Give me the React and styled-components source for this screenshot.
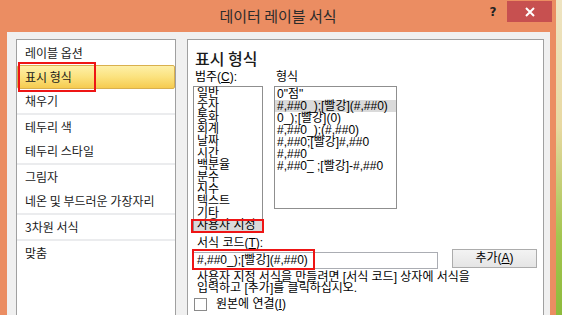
import React from 'react';
import styled, { createGlobalStyle } from 'styled-components';

const GlobalStyle = createGlobalStyle`
  html, body {
    margin: 0;
    padding: 0;
    overflow: hidden;
  }

  body {
    font-family: "Noto Sans CJK KR", "Noto Sans", sans-serif;
  }
`;

const MIXED = `"Liberation Sans", "Noto Sans CJK KR", sans-serif`;

const Desktop = styled.div`
  width: 562px;
  height: 315px;
  display: flex;
  overflow: hidden;
  background: linear-gradient(#eee4c2, #e8d9a2 40%, #a3c650 75%, #8dbb3c);
`;

const Window = styled.div`
  width: 556px;
  flex: none;
  display: flex;
  flex-direction: column;
  background: #eb8d62;
`;

const TitleBar = styled.div`
  height: 32px;
  flex: none;
  display: grid;
  grid-template-columns: 1fr auto 1fr;
  align-items: start;
`;

const Title = styled.div`
  grid-column: 2;
  font-size: 15px;
  line-height: 32px;
  color: #2b2b2b;
`;

const Controls = styled.div`
  justify-self: end;
  display: flex;
  align-items: flex-start;
  padding-right: 4px;
`;

const HelpButton = styled.div`
  width: 28px;
  height: 24px;
  font-family: "DejaVu Sans", sans-serif;
  font-weight: bold;
  font-size: 12px;
  line-height: 25px;
  text-align: center;
  color: #222;
`;

const CloseButton = styled.div`
  width: 45px;
  height: 21px;
  margin-top: 1px;
  background: #c75050;
  display: flex;
  align-items: center;
  justify-content: center;
`;

const Frame = styled.div`
  flex: 1;
  padding: 0 6px 0 7px;
  display: flex;
`;

const Client = styled.div`
  flex: 1;
  background: #f0f0f0;
  display: flex;
  gap: 11px;
  padding: 7px 6px 0 9px;
`;

const Panel = styled.div`
  background: #fff;
  border: 1px solid #a0a0a0;
  border-bottom: none;
  box-sizing: border-box;
`;

const NavPanel = styled(Panel)`
  width: 160px;
  flex: none;
  padding-top: 1px;
`;

const NavItem = styled.div`
  position: relative;
  height: 24px;
  line-height: 24px;
  font-size: 12px;
  color: #1a1a1a;
  padding-left: ${(p) => (p.$active ? '7px' : '8px')};
  box-sizing: border-box;
  ${(p) =>
    p.$active &&
    `
    border: 1px solid #d9b04e;
    border-radius: 2px;
    line-height: 22px;
    background: linear-gradient(#fef0a8, #fbe27e 50%, #f6cb50);
  `}
`;

const NavSeparator = styled.div`
  height: 2px;
  background: #ebecee;
`;

const RedMark = styled.div`
  position: absolute;
  top: ${(p) => p.$top}px;
  left: ${(p) => p.$left}px;
  width: ${(p) => p.$width}px;
  height: ${(p) => p.$height}px;
  border: 2px solid #ee1515;
  box-sizing: border-box;
  pointer-events: none;
`;

const ContentPanel = styled(Panel)`
  flex: 1;
  padding: 7px 5px 0;
  display: flex;
  flex-direction: column;
`;

const Heading = styled.div`
  font-size: 16px;
  font-weight: 500;
  line-height: 22px;
  padding-left: 2px;
  margin-bottom: 1px;
  color: #1b1b1b;
`;

const ListsGrid = styled.div`
  display: grid;
  grid-template-columns: 70px 123px;
  column-gap: 11px;
  align-items: start;
`;

const FieldLabel = styled.div`
  font-family: ${MIXED};
  font-size: 12px;
  line-height: 14px;
  padding-left: 2px;
  margin-bottom: 2px;
  color: #000;
`;

const ListBox = styled.div`
  border: 1px solid #8f8f8f;
  background: #fff;
  box-sizing: border-box;
  padding: ${(p) => (p.$fixed ? '1px 0 0' : '0 0 1px')};
  height: ${(p) => (p.$fixed ? '123px' : 'auto')};
  overflow: ${(p) => (p.$fixed ? 'hidden' : 'visible')};
`;

const ListRow = styled.div`
  position: relative;
  height: 12px;
  line-height: 12px;
  font-family: ${MIXED};
  font-size: 12px;
  color: #000;
  white-space: nowrap;
  padding-left: ${(p) => p.$indent}px;
  background: ${(p) => (p.$selected ? '#dadada' : 'transparent')};
`;

const CodeLabel = styled(FieldLabel)`
  margin: 4px 0 0;
  line-height: 12px;
  padding-left: 4px;
`;

const CodeRow = styled.div`
  display: flex;
  align-items: flex-start;
  gap: 14px;
  height: 20px;
`;

const CodeInput = styled.div`
  position: relative;
  width: 245px;
  height: 17px;
  margin-top: 3px;
  border: 1px solid #abadb3;
  box-sizing: border-box;
  background: #fff;
  padding-left: 3px;
  font-family: ${MIXED};
  font-size: 12px;
  line-height: 15px;
  color: #000;
`;

const AddButton = styled.div`
  width: 85px;
  height: 19px;
  border: 1px solid #acacac;
  box-sizing: border-box;
  background: linear-gradient(#f3f3f3, #e5e5e5);
  font-family: ${MIXED};
  font-size: 12px;
  line-height: 17px;
  text-align: center;
  color: #000;
`;

const Description = styled.div`
  margin-top: 3px;
  padding-left: 4px;
  font-family: ${MIXED};
  font-size: 12px;
  line-height: 11px;
  color: #000;
`;

const CheckRow = styled.div`
  margin-top: 3px;
  padding-left: 1px;
  display: flex;
  align-items: center;
  gap: 9px;
  font-family: ${MIXED};
  font-size: 12px;
  line-height: 14px;
  color: #000;
`;

const CheckBox = styled.div`
  width: 13px;
  height: 13px;
  border: 1px solid #8a8a8a;
  box-sizing: border-box;
  background: #fff;
`;

const Key = styled.span`
  text-decoration: underline;
`;

const navGroups = [
  ['레이블 옵션', '표시 형식', '채우기'],
  ['테두리 색', '테두리 스타일'],
  ['그림자', '네온 및 부드러운 가장자리'],
  ['3차원 서식'],
  ['맞춤'],
];

const categories = [
  '일반', '숫자', '통화', '회계', '날짜', '시간',
  '백분율', '분수', '지수', '텍스트', '기타', '사용자 지정',
];

const formats = [
  '0"점"',
  '#,##0_);[빨강](#,##0)',
  '0_);[빨강](0)',
  '#,##0_);(#,##0)',
  '#,##0;[빨강]#,##0',
  '#,##0_',
  '#,##0_ ;[빨강]-#,##0',
];

const CloseIcon = () => (
  <svg width="10" height="10" viewBox="0 0 10 10">
    <path d="M1 1 L9 9 M9 1 L1 9" stroke="#fff" strokeWidth="2" />
  </svg>
);

const App = () => {
  return (
    <>
      <GlobalStyle />
      <Desktop>
        <Window>
          <TitleBar>
            <Title>데이터 레이블 서식</Title>
            <Controls>
              <HelpButton>?</HelpButton>
              <CloseButton>
                <CloseIcon />
              </CloseButton>
            </Controls>
          </TitleBar>
          <Frame>
            <Client>
              <NavPanel>
                {navGroups.map((group, gi) => (
                  <React.Fragment key={gi}>
                    {gi > 0 && <NavSeparator />}
                    {group.map((label) => (
                      <NavItem key={label} $active={label === '표시 형식'}>
                        {label}
                        {label === '표시 형식' && (
                          <RedMark $top={-4} $left={0} $width={78} $height={30} />
                        )}
                      </NavItem>
                    ))}
                  </React.Fragment>
                ))}
              </NavPanel>

              <ContentPanel>
                <Heading>표시 형식</Heading>
                <ListsGrid>
                  <div>
                    <FieldLabel>
                      범주(<Key>C</Key>):
                    </FieldLabel>
                    <ListBox>
                      {categories.map((c) => (
                        <ListRow key={c} $indent={3} $selected={c === '사용자 지정'}>
                          {c}
                          {c === '사용자 지정' && (
                            <RedMark $top={0} $left={-3} $width={73} $height={14} />
                          )}
                        </ListRow>
                      ))}
                    </ListBox>
                  </div>
                  <div>
                    <FieldLabel>형식</FieldLabel>
                    <ListBox $fixed>
                      {formats.map((f, i) => (
                        <ListRow key={f} $indent={2} $selected={i === 1}>
                          {f}
                        </ListRow>
                      ))}
                    </ListBox>
                  </div>
                </ListsGrid>

                <CodeLabel>
                  서식 코드(<Key>T</Key>):
                </CodeLabel>
                <CodeRow>
                  <CodeInput>
                    #,##0_);[빨강](#,##0)
                    <RedMark $top={-4} $left={-2} $width={123} $height={21} />
                  </CodeInput>
                  <AddButton>
                    추가(<Key>A</Key>)
                  </AddButton>
                </CodeRow>

                <Description>
                  사용자 지정 서식을 만들려면 [서식 코드] 상자에 서식을
                  <br />
                  입력하고 [추가]를 클릭하십시오.
                </Description>

                <CheckRow>
                  <CheckBox />
                  <span>
                    원본에 연결(<Key>I</Key>)
                  </span>
                </CheckRow>
              </ContentPanel>
            </Client>
          </Frame>
        </Window>
      </Desktop>
    </>
  );
};

export default App;
